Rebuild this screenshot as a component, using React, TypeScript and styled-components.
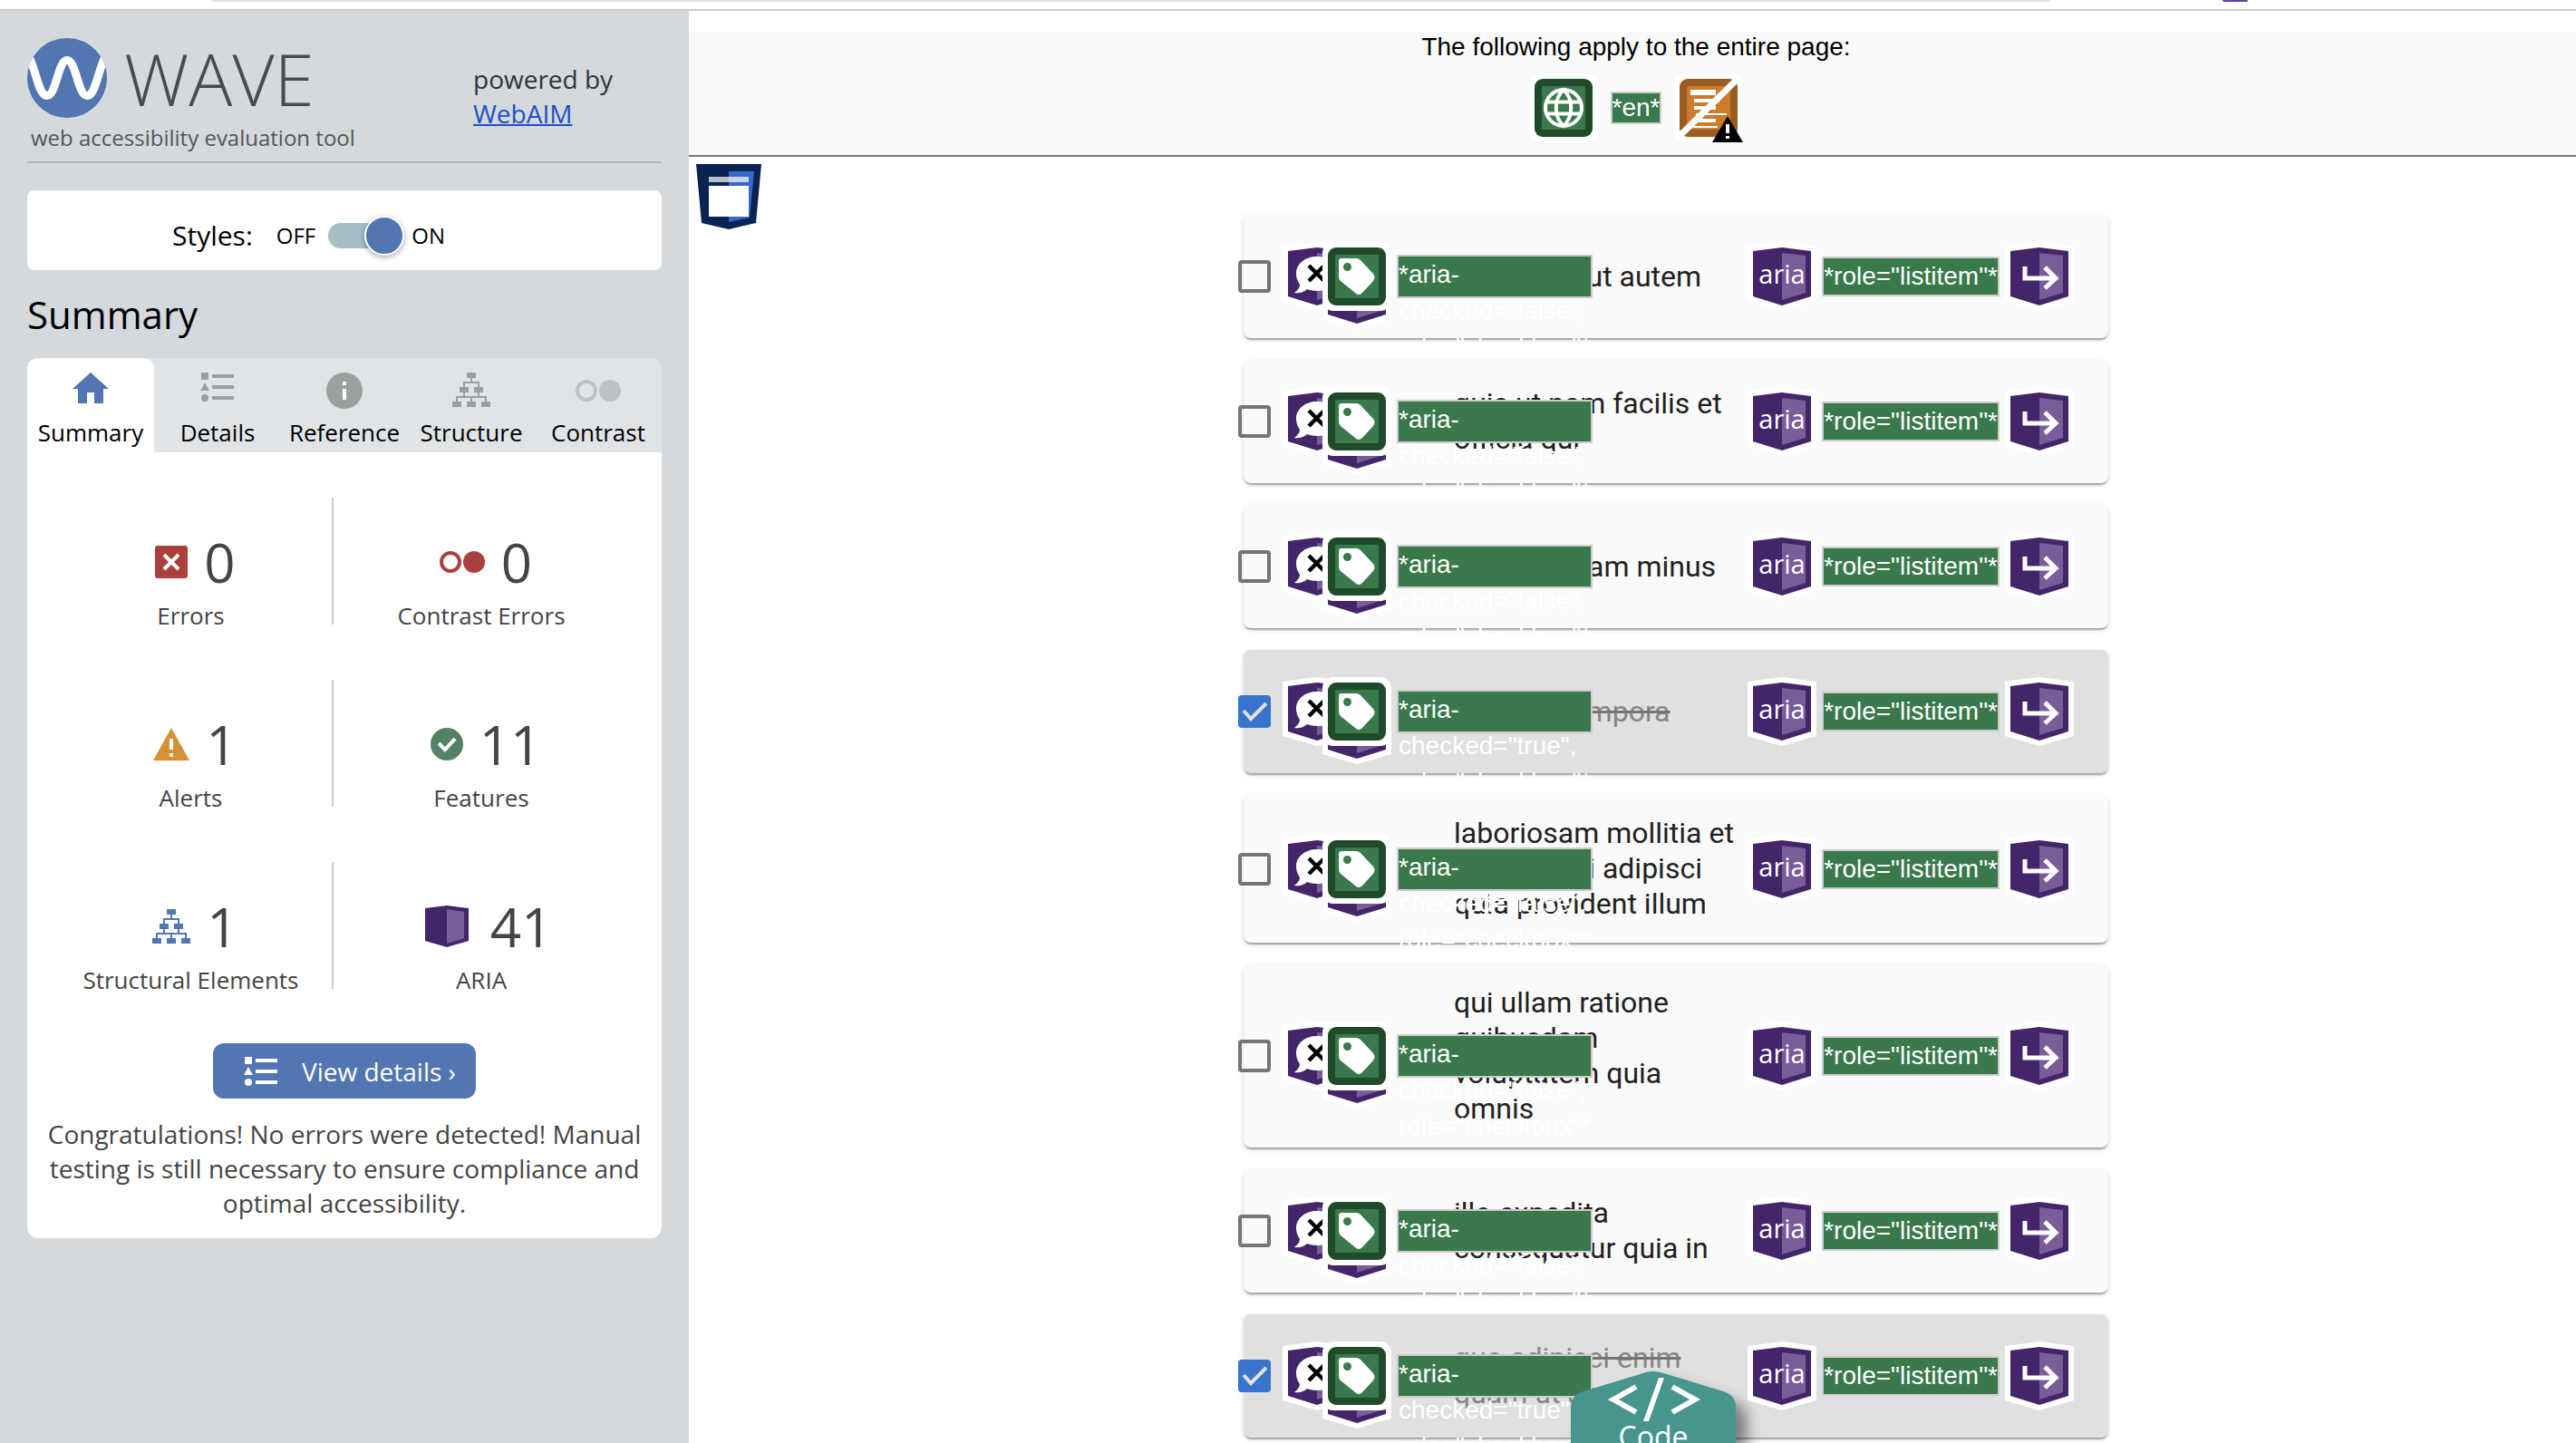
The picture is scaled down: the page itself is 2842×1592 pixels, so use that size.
import React from 'react';
import styled, { createGlobalStyle, css } from 'styled-components';

const sans = "'Open Sans', 'Noto Sans', sans-serif";
const arial = "'Liberation Sans', Arial, sans-serif";
const roboto = 'Roboto, sans-serif';

const GlobalStyle = createGlobalStyle`
  *, *::before, *::after { box-sizing: border-box; }
  body { margin: 0; background: #fff; font-family: ${sans}; }
  h1, h2, p, ul { margin: 0; padding: 0; font-weight: 400; }
  ul { list-style: none; }
  svg { display: block; flex: none; overflow: visible; }
`;

const Screen = styled.div`
  display: flex;
  flex-direction: column;
  height: 100vh;
  overflow: hidden;
`;

const BrowserEdge = styled.div`
  display: flex;
  flex: none;
  align-items: flex-start;
  gap: 190px;
  height: 12px;
  padding: 0 362px 0 234px;
  border-bottom: 2px solid #cccccc;
`;

const AddressBarEdge = styled.div`
  flex: 1;
  height: 2px;
  border-radius: 0 0 14px 14px;
  background: #e0e0e0;
`;

const ExtensionEdge = styled.div`
  width: 28px;
  height: 2px;
  border-radius: 0 0 4px 4px;
  background: #673ab7;
`;

const Columns = styled.div`
  display: flex;
  flex: 1;
  min-height: 0;
`;

/* ---------- sidebar ---------- */

const Sidebar = styled.aside`
  flex: none;
  width: 760px;
  padding: 30px;
  background: #d4d9dd;
`;

const BrandBar = styled.header`
  display: flex;
  padding-bottom: 10px;
  border-bottom: 2px solid #b1b6b8;
`;

const Brand = styled.div`
  flex: 1;
`;

const LogoRow = styled.div`
  display: flex;
  gap: 19px;
`;

const LogoName = styled.h1`
  color: #4b4b4b;
  font-size: 80px;
  font-weight: 300;
  line-height: 88px;
`;

const Tagline = styled.p`
  padding: 6px 0 0 4px;
  color: #555;
  font-size: 24px;
  line-height: 32px;
`;

const Powered = styled.p`
  width: 208px;
  padding-top: 26px;
  color: #333;
  font-size: 28px;
  line-height: 38px;
`;

const WebLink = styled.a`
  display: block;
  color: #1f4fc4;
  text-decoration-thickness: 2px;
`;

const StylesBox = styled.div`
  display: flex;
  align-items: center;
  height: 88px;
  margin-top: 30px;
  padding: 12px 0 0 160px;
  border-radius: 8px;
  background: #fff;
  color: #000;
  font-size: 24px;
  line-height: 40px;
`;

const StylesLabel = styled.label`
  margin-right: 26px;
  font-size: 30px;
`;

const Toggle = styled.input`
  appearance: none;
  position: relative;
  width: 72px;
  height: 28px;
  margin: 0 20px 0 14px;
  border-radius: 14px;
  background: #a5bec8;

  &::before {
    content: '';
    position: absolute;
    top: -8px;
    right: -12px;
    width: 44px;
    height: 44px;
    border: 2px solid #fff;
    border-radius: 50%;
    background: #5276b1;
    box-shadow: 0 2px 6px rgba(0, 0, 0, 0.35);
  }
`;

const SectionTitle = styled.h2`
  margin: 20px 0;
  color: #000;
  font-size: 42px;
  line-height: 57px;
`;

const Tabs = styled.div`
  display: grid;
  grid-template-columns: repeat(5, 1fr);
  border-radius: 12px 12px 0 0;
  background: #e0e4e7;
`;

const Tab = styled.button<{ $active?: boolean }>`
  display: flex;
  flex-direction: column;
  align-items: center;
  gap: 8px;
  padding: 16px 0 4px;
  border: 0;
  border-radius: 12px 12px 0 0;
  background: ${(p) => (p.$active ? '#fff' : 'transparent')};
  color: #000;
  font: 26px/36px ${sans};
`;

const Panel = styled.section`
  padding: 50px 20px 20px;
  border-radius: 0 0 12px 12px;
  background: #fff;
  color: #444;
`;

const Stats = styled.div`
  display: flex;
  flex-direction: column;
  gap: 53px;
`;

const StatRow = styled.div`
  display: grid;
  grid-template-columns: 311fr 2px 326fr;
  padding: 0 16px 0 5px;
`;

const Divider = styled.span`
  height: 140px;
  background: #cccccc;
`;

const Stat = styled.div`
  display: flex;
  flex-direction: column;
  align-items: center;
  gap: 11px;
  padding-top: 41px;
  font-size: 26px;
  line-height: 36px;
`;

const StatFigure = styled.div`
  display: flex;
  align-items: center;
  gap: 18px;
  padding-left: 10px;
  font-size: 60px;
  line-height: 60px;
`;

const DetailsButton = styled.button`
  display: flex;
  align-items: center;
  gap: 26px;
  height: 61px;
  margin: 52px auto 20px;
  padding: 0 22px 0 34px;
  border: 0;
  border-radius: 12px;
  background: #5276b1;
  color: #fff;
  font: 28px/38px ${sans};
`;

const Message = styled.p`
  font-size: 28px;
  line-height: 38px;
  text-align: center;
`;

/* ---------- inspected page ---------- */

const Page = styled.main`
  position: relative;
  flex: 1;
  min-width: 0;
  padding-top: 23px;
`;

const PageNotice = styled.div`
  display: flex;
  flex-direction: column;
  align-items: center;
  gap: 12px;
  padding: 0 0 14px 8px;
  border-bottom: 2px solid #757b74;
  background: #f9f9f9;
  color: #000;
  font: 28px/34px ${arial};
`;

const NoticeIcons = styled.div`
  display: flex;
  align-items: center;
  gap: 14px;
`;

const Tag = styled.span<{ $line?: number }>`
  border: 2px solid #cccccc;
  background: #39794c;
  color: #fff;
  font-family: ${arial};
  font-size: 28px;
  line-height: ${(p) => p.$line ?? 40}px;
  white-space: nowrap;
`;

const AttributeTag = styled(Tag)`
  width: 216px;
  height: 48px;
  white-space: normal;
`;

const PageBody = styled.div`
  display: flex;
  gap: 16px;
  padding: 8px 0 0 8px;
`;

const List = styled.ul`
  display: flex;
  flex: 1;
  flex-direction: column;
  align-items: center;
  gap: 24px;
  padding-top: 56px;
`;

const Item = styled.li<{ $done: boolean }>`
  position: relative;
  display: flex;
  align-items: center;
  width: 100%;
  max-width: 954px;
  min-height: 136px;
  padding: 23px 38px 23px 0;
  border-radius: 8px;
  background: ${(p) => (p.$done ? '#e0e0e0' : '#fafafa')};
  box-shadow: 0 4px 2px -2px rgba(0, 0, 0, 0.2), 0 2px 2px rgba(0, 0, 0, 0.14), 0 2px 6px rgba(0, 0, 0, 0.12);
`;

const CheckCell = styled.span`
  display: grid;
  flex: none;
  width: 36px;
  margin-left: -6px;

  > * { grid-area: 1 / 1; }
  > svg { pointer-events: none; }
`;

const Check = styled.input`
  appearance: none;
  width: 36px;
  height: 36px;
  margin: 0;
  border: 4px solid #757575;
  border-radius: 4px;

  &:checked {
    border-color: #3874cb;
    background: #3874cb;
  }
`;

const ItemText = styled.label<{ $done: boolean }>`
  flex: 1;
  min-width: 0;
  padding: 0 6px 0 202px;
  color: #212121;
  font: 32px/39px ${roboto};
  ${(p) =>
    p.$done &&
    css`
      color: #868686;
      text-decoration: line-through;
      text-decoration-color: #757575;
    `}
`;

const LeadMarkers = styled.span`
  position: absolute;
  top: 50%;
  left: 43px;
  display: flex;
  align-items: center;
  transform: translateY(-50%);

  > svg + svg { margin: 0 6px 0 -32px; }
`;

const TrailMarkers = styled.span`
  display: flex;
  flex: none;
  align-items: center;
  gap: 6px;
`;

const CodeDock = styled.div`
  position: absolute;
  right: 0;
  bottom: 0;
  left: 0;
  display: flex;
  justify-content: center;
  padding-left: 46px;
  pointer-events: none;
`;

const CodeButton = styled.button`
  display: grid;
  width: 182px;
  height: 79px;
  padding: 0;
  border: 0;
  background: none;
  color: #fff;
  font: 32px/44px ${sans};
  pointer-events: auto;

  > * { grid-area: 1 / 1; }
  > svg { filter: drop-shadow(12px 12px 8px rgba(0, 0, 0, 0.45)); }
`;

const CodeLabel = styled.span`
  z-index: 1;
  padding-top: 50px;
`;

/* ---------- drawings ---------- */

const Logo = () => (
  <svg width="88" height="88" viewBox="0 0 88 88" aria-hidden="true">
    <defs>
      <clipPath id="logo-disc"><circle cx="44" cy="44" r="44" /></clipPath>
    </defs>
    <circle cx="44" cy="44" r="44" fill="#5276b1" />
    <path
      d="M1 19C10 34 12 63.5 22 63.5S34 24.5 44 24.5S56 63.5 66 63.5S78 34 87 19"
      fill="none" stroke="#fff" strokeWidth="9" clipPath="url(#logo-disc)"
    />
  </svg>
);

const HomeIcon = () => (
  <svg width="40" height="40" viewBox="0 0 40 40" fill="#5276b1" aria-hidden="true">
    <path d="M20 0L40 18H34V34H24V22H16V34H6V18H0Z" />
  </svg>
);

const ListIcon = ({ color, height = 40 }: { color: string; height?: number }) => (
  <svg width="38" height={height} viewBox={`0 0 38 ${height}`} fill={color} aria-hidden="true">
    <path d="M1 0h8v8H1zM13 2h24v4H13zM0 20L5 11L10 20ZM13 14h24v4H13zM13 26h24v4H13z" />
    <circle cx="5" cy="28" r="4" />
  </svg>
);

const InfoIcon = () => (
  <svg width="40" height="40" viewBox="0 0 40 40" aria-hidden="true">
    <circle cx="20" cy="20" r="20" fill="#9b9fa0" />
    <path d="M18 10h4v4h-4zM18 18h4v12h-4z" fill="#fff" />
  </svg>
);

const TreeIcon = ({ color, height = 40 }: { color: string; height?: number }) => (
  <svg width="42" height={height} viewBox={`0 0 42 ${height}`} fill={color} aria-hidden="true">
    <path d="M16 0h10v6H16zM8 16h10v6H8zM24 16h10v6H24zM0 32h10v6H0zM16 32h10v6H16zM32 32h10v6H32z" />
    <path d="M21 6v5M13 16v-5h16v5M13 22v5M29 22v5M5 32v-5h32v5M21 27v5" fill="none" stroke={color} strokeWidth="2" />
  </svg>
);

const ContrastIcon = ({ color }: { color: string }) => (
  <svg width="50" height="40" viewBox="0 0 50 40" aria-hidden="true">
    <circle cx="12" cy="20" r="10" fill="none" stroke={color} strokeWidth="4" />
    <circle cx="38" cy="20" r="12" fill={color} />
  </svg>
);

const ErrorIcon = () => (
  <svg width="36" height="36" viewBox="0 0 36 36" aria-hidden="true">
    <rect width="36" height="36" rx="3" fill="#aa403d" />
    <path d="M10 10L26 26M26 10L10 26" stroke="#fff" strokeWidth="4" />
  </svg>
);

const AlertIcon = () => (
  <svg width="40" height="36" viewBox="0 0 40 36" aria-hidden="true">
    <path d="M20 0L40 36H0Z" fill="#d69138" />
    <path d="M18 12h4v12h-4zM18 28h4v4h-4z" fill="#fff" />
  </svg>
);

const FeatureIcon = () => (
  <svg width="36" height="36" viewBox="0 0 36 36" aria-hidden="true">
    <circle cx="18" cy="18" r="18" fill="#548266" />
    <path d="M9 17L16 24L27 12" fill="none" stroke="#fff" strokeWidth="4" />
  </svg>
);

const AriaIcon = () => (
  <svg width="60" height="46" viewBox="0 0 60 46" aria-hidden="true">
    <path d="M30 0L54 3V39L30 46L6 39V3Z" fill="#45256a" />
    <path d="M30 4L49 7V36L30 42Z" fill="#785d99" />
  </svg>
);

const hexagon = 'M6 10L38 6L70 10V60L38 70L6 60Z';

const HexMarker = ({ children }: { children?: React.ReactNode }) => (
  <svg width="76" height="76" viewBox="0 0 76 76" aria-hidden="true">
    <path d="M0 5L38 0L76 5V65L38 76L0 65Z" fill="#fff" />
    <path d={hexagon} fill="#45256a" />
    <path d="M38 12L64 15V56L38 64Z" fill="#785d99" />
    {children}
  </svg>
);

const HiddenMarker = () => (
  <HexMarker>
    <path d="M38 16C51 16 61 24 61 35C61 46 51 54 38 54C34 54 30 53 27 52C24 55 19 57 13 56C17 53 19 50 19 47C17 44 15 40 15 35C15 24 25 16 38 16Z" fill="#fff" />
    <path d="M29 26L46 43M46 26L29 43" stroke="#000" strokeWidth="4.5" />
  </HexMarker>
);

const AriaMarker = () => (
  <HexMarker>
    <text x="38" y="46" textAnchor="middle" fill="#fff" fontFamily={sans} fontSize="29">aria</text>
  </HexMarker>
);

const ArrowMarker = () => (
  <HexMarker>
    <path d="M22 27V40H56M44 28L56 40L44 51" fill="none" stroke="#fff" strokeWidth="5" />
  </HexMarker>
);

const LabelMarker = () => (
  <svg width="76" height="76" viewBox="0 0 76 76" aria-hidden="true">
    <path d="M0 20H76V85L38 96L0 85Z" fill="#fff" />
    <path d="M6 50H70V80L38 90L6 80Z" fill="#45256a" />
    <path d="M38 50H64V76L38 84Z" fill="#785d99" />
    <rect width="76" height="76" rx="12" fill="#fff" />
    <rect x="6" y="6" width="64" height="64" rx="9" fill="#1f4b2b" />
    <rect x="14" y="14" width="48" height="48" rx="1" fill="#39794c" />
    <path d="M21 18H37Q40 18 42 20L56 35Q59 39 56 43L44 56Q40 60 36 56L20 43Q18 41 18 38V21Q18 18 21 18Z" fill="#fff" />
    <circle cx="27.500" cy="27.500" r="4.500" fill="#39794c" />
  </svg>
);

const LanguageIcon = () => (
  <svg width="76" height="76" viewBox="0 0 76 76" aria-hidden="true">
    <rect width="76" height="76" rx="12" fill="#fff" />
    <rect x="6" y="6" width="64" height="64" rx="9" fill="#1f4b2b" />
    <rect x="14" y="14" width="48" height="48" rx="1" fill="#39794c" />
    <g fill="none" stroke="#fff" strokeWidth="4">
      <circle cx="38" cy="38" r="20" />
      <path d="M19 31.500H57M19 44.500H57" />
      <path d="M38 18C27 28 27 48 38 58C49 48 49 28 38 18Z" />
    </g>
  </svg>
);

const NoHeadingIcon = () => (
  <svg width="76" height="76" viewBox="0 0 76 76" aria-hidden="true">
    <rect width="76" height="76" rx="12" fill="#fff" />
    <rect x="6" y="6" width="64" height="64" rx="9" fill="#9a5d1f" />
    <rect x="14" y="14" width="48" height="48" rx="1" fill="#cc7a2b" />
    <path d="M18 18h28v6H18zM22 28h28v4H22zM22 36h24v4H22zM24 44h34v2H24zM22 50h24v4H22zM18 58h30v2H18z" fill="#fff" />
    <path d="M7 68L69 7" stroke="#fff" strokeWidth="7" />
    <path d="M59 47L76 76H42Z" fill="#000" />
    <path d="M57 56h4v10h-4zM57 69h4v3h-4z" fill="#fff" />
  </svg>
);

const DocumentIcon = () => (
  <svg width="72" height="72" viewBox="0 0 72 72" aria-hidden="true">
    <path d="M0 0H72L66 65L36 72L6 65Z" fill="#0a2352" />
    <path d="M36 8H64L59 59L36 64Z" fill="#376ac4" />
    <rect x="14" y="14" width="44" height="6" fill="#fff" opacity="0.7" />
    <rect x="14" y="24" width="44" height="34" fill="#fff" />
  </svg>
);

const CodeShape = () => (
  <svg width="182" height="79" viewBox="0 0 182 79" aria-hidden="true">
    <path d="M83 1Q91 -1 99 1L168 22Q182 26 182 40V100H0V40Q0 26 14 22Z" fill="#46958e" />
    <path d="M72 17L47 31L72 45M112 17L137 31L112 45" fill="none" stroke="#fff" strokeWidth="6" />
    <path d="M97 7H103L86 55H80Z" fill="#fff" />
  </svg>
);

/* ---------- data ---------- */

const tabs = [
  { name: 'Summary', icon: <HomeIcon /> },
  { name: 'Details', icon: <ListIcon color="#9b9fa0" /> },
  { name: 'Reference', icon: <InfoIcon /> },
  { name: 'Structure', icon: <TreeIcon color="#9b9fa0" /> },
  { name: 'Contrast', icon: <ContrastIcon color="#bcc1c4" /> },
];

const stats = [
  [
    { name: 'Errors', count: 0, icon: <ErrorIcon /> },
    { name: 'Contrast Errors', count: 0, icon: <ContrastIcon color="#aa403d" /> },
  ],
  [
    { name: 'Alerts', count: 1, icon: <AlertIcon /> },
    { name: 'Features', count: 11, icon: <FeatureIcon /> },
  ],
  [
    { name: 'Structural Elements', count: 1, icon: <TreeIcon color="#5276b1" height={38} /> },
    { name: 'ARIA', count: 41, icon: <AriaIcon /> },
  ],
];

const todos = [
  { title: 'delectus aut autem', done: false },
  { title: 'quis ut nam facilis et officia qui', done: false },
  { title: 'fugiat veniam minus', done: false },
  { title: 'et porro tempora', done: true },
  { title: 'laboriosam mollitia et enim quasi adipisci quia provident illum', done: false },
  { title: 'qui ullam ratione quibusdam voluptatem quia omnis', done: false },
  { title: 'illo expedita consequatur quia in', done: false },
  { title: 'quo adipisci enim quam ut ab', done: true },
];

const TodoItem = ({ id, title, done }: { id: string; title: string; done: boolean }) => (
  <Item $done={done}>
    <CheckCell>
      <Check type="checkbox" id={id} defaultChecked={done} />
      {done && (
        <svg width="36" height="36" viewBox="0 0 36 36" aria-hidden="true">
          <path d="M6 17L14 26L31 9" fill="none" stroke="#e0e0e0" strokeWidth="4" />
        </svg>
      )}
    </CheckCell>
    <ItemText htmlFor={id} $done={done}>{title}</ItemText>
    <TrailMarkers>
      <AriaMarker />
      <Tag>*role="listitem"*</Tag>
      <ArrowMarker />
    </TrailMarkers>
    <LeadMarkers>
      <HiddenMarker />
      <LabelMarker />
      <AttributeTag>{`*aria-checked="${done}", role="checkbox"*`}</AttributeTag>
    </LeadMarkers>
  </Item>
);

export default function App() {
  return (
    <Screen>
      <GlobalStyle />
      <BrowserEdge>
        <AddressBarEdge />
        <ExtensionEdge />
      </BrowserEdge>
      <Columns>
        <Sidebar>
          <BrandBar>
            <Brand>
              <LogoRow>
                <Logo />
                <LogoName>WAVE</LogoName>
              </LogoRow>
              <Tagline>web accessibility evaluation tool</Tagline>
            </Brand>
            <Powered>
              powered by <WebLink href="#webaim">WebAIM</WebLink>
            </Powered>
          </BrandBar>
          <StylesBox>
            <StylesLabel htmlFor="styles-toggle">Styles:</StylesLabel>
            <span>OFF</span>
            <Toggle type="checkbox" role="switch" id="styles-toggle" defaultChecked />
            <span>ON</span>
          </StylesBox>
          <SectionTitle>Summary</SectionTitle>
          <Tabs role="tablist">
            {tabs.map((tab, i) => (
              <Tab key={tab.name} type="button" role="tab" aria-selected={i === 0} $active={i === 0}>
                {tab.icon}
                {tab.name}
              </Tab>
            ))}
          </Tabs>
          <Panel>
            <Stats>
              {stats.map(([left, right]) => (
                <StatRow key={left.name}>
                  <Stat>
                    <StatFigure>{left.icon}{left.count}</StatFigure>
                    {left.name}
                  </Stat>
                  <Divider />
                  <Stat>
                    <StatFigure>{right.icon}{right.count}</StatFigure>
                    {right.name}
                  </Stat>
                </StatRow>
              ))}
            </Stats>
            <DetailsButton type="button">
              <ListIcon color="#fff" height={32} />
              View details ›
            </DetailsButton>
            <Message>
              Congratulations! No errors were detected! Manual testing is still necessary to ensure
              compliance and optimal accessibility.
            </Message>
          </Panel>
        </Sidebar>
        <Page>
          <PageNotice>
            <p>The following apply to the entire page:</p>
            <NoticeIcons>
              <LanguageIcon />
              <Tag $line={32}>*en*</Tag>
              <NoHeadingIcon />
            </NoticeIcons>
          </PageNotice>
          <PageBody>
            <DocumentIcon />
            <List>
              {todos.map((todo, i) => (
                <TodoItem key={todo.title} id={`todo-${i}`} {...todo} />
              ))}
            </List>
          </PageBody>
          <CodeDock>
            <CodeButton type="button">
              <CodeShape />
              <CodeLabel>Code</CodeLabel>
            </CodeButton>
          </CodeDock>
        </Page>
      </Columns>
    </Screen>
  );
}
